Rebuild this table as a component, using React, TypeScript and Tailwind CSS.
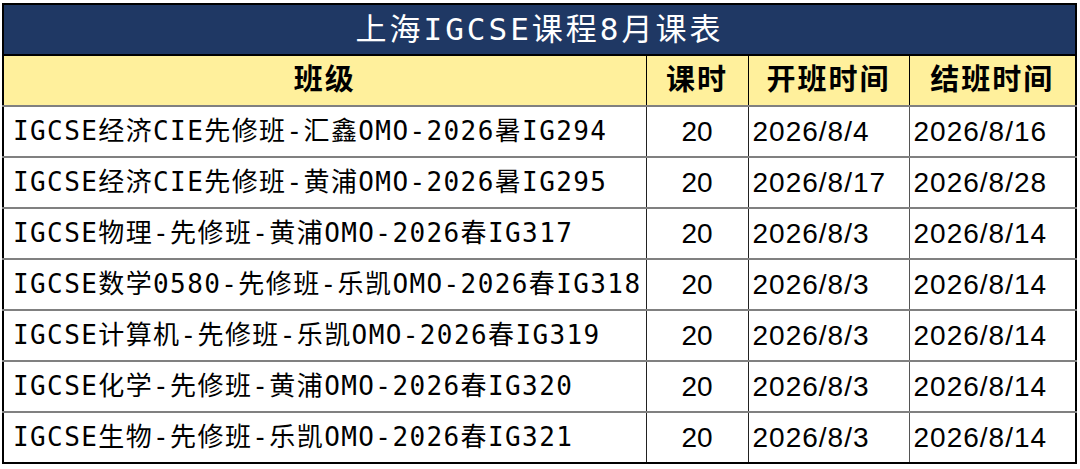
import React from "react";

const rows = [
  ["IGCSE经济CIE先修班-汇鑫OMO-2026暑IG294", "20", "2026/8/4", "2026/8/16"],
  ["IGCSE经济CIE先修班-黄浦OMO-2026暑IG295", "20", "2026/8/17", "2026/8/28"],
  ["IGCSE物理-先修班-黄浦OMO-2026春IG317", "20", "2026/8/3", "2026/8/14"],
  ["IGCSE数学0580-先修班-乐凯OMO-2026春IG318", "20", "2026/8/3", "2026/8/14"],
  ["IGCSE计算机-先修班-乐凯OMO-2026春IG319", "20", "2026/8/3", "2026/8/14"],
  ["IGCSE化学-先修班-黄浦OMO-2026春IG320", "20", "2026/8/3", "2026/8/14"],
  ["IGCSE生物-先修班-乐凯OMO-2026春IG321", "20", "2026/8/3", "2026/8/14"],
];

const cjk = "font-['DejaVu_Sans_Mono','Noto_Sans_CJK_SC',monospace]";
const num = "font-['Liberation_Sans','Noto_Sans_CJK_SC',sans-serif]";

export default function App() {
  return (
    <div className="w-[1080px] h-[469px] bg-white pt-[3px] pl-[2px] overflow-hidden">
      <table className="table-fixed border-collapse border-2 border-black w-[1073px]">
        <colgroup>
          <col className="w-[643px]" />
          <col className="w-[102px]" />
          <col className="w-[161px]" />
          <col className="w-[167px]" />
        </colgroup>
        <thead>
          <tr className="h-[51px] bg-[#1f3864]">
            <th
              colSpan={4}
              className={`${cjk} text-white text-[31px] font-normal tracking-[3px] text-center border-b-2 border-black`}
            >
              上海IGCSE课程8月课表
            </th>
          </tr>
          <tr className={`h-[51px] bg-[#fff09c] ${cjk} text-black text-[29px] font-bold tracking-[2px]`}>
            <th className="border-r border-black text-center">班级</th>
            <th className="border-r border-black text-center">课时</th>
            <th className="border-r border-black text-center">开班时间</th>
            <th className="text-center">结班时间</th>
          </tr>
        </thead>
        <tbody>
          {rows.map((r, i) => (
            <tr key={i} className="h-[51px] border-t-2 border-[#808080]">
              <td className={`${cjk} text-[26px] tracking-[1.4px] text-black pl-[9px] whitespace-nowrap border-r border-[#222]`}>
                {r[0]}
              </td>
              <td className={`${num} text-[28px] text-black text-center border-r border-[#222]`}>{r[1]}</td>
              <td className={`${num} text-[28px] tracking-[1px] text-black pl-[4px] whitespace-nowrap border-r border-[#555]`}>
                {r[2]}
              </td>
              <td className={`${num} text-[28px] tracking-[1px] text-black pl-[4px] whitespace-nowrap`}>{r[3]}</td>
            </tr>
          ))}
        </tbody>
      </table>
    </div>
  );
}
